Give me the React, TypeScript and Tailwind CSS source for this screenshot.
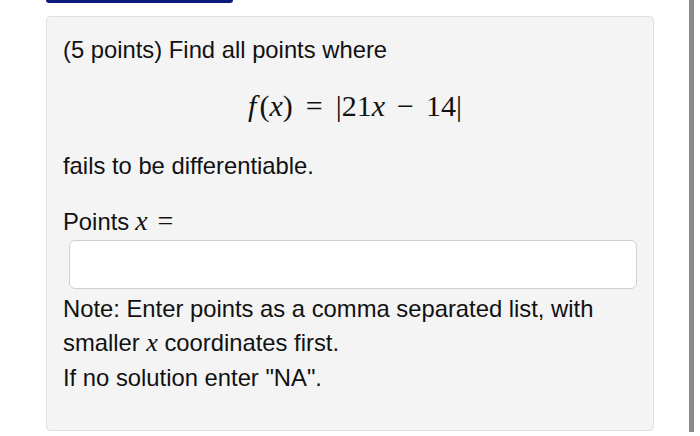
import React from "react";

const sans = { fontFamily: '"Liberation Sans", Arial, sans-serif' };
const serif = { fontFamily: '"Liberation Serif", "Times New Roman", serif' };

function MathX() {
  return <span className="italic" style={serif}>x</span>;
}

export default function App() {
  return (
    <div className="flex w-[700px] h-[436px] bg-white overflow-hidden" style={sans}>
      <div className="w-[689px] pl-[46px]">
        <div className="w-[187px] h-[3px] bg-[#0b1a7c] rounded-b-[4px]" />
        <div className="mt-[13px] w-[608px] h-[415px] bg-[#f4f4f4] border border-[#e0e0e0] rounded-[4px] pl-[16px] pr-[8px] pt-[16px] text-[23.8px] leading-[34.5px] text-[#111]">
          <p>(5 points) Find all points where</p>
          <div className="mt-[22px] h-[34px] flex justify-center items-center text-[30px] pl-[2px]" style={serif}>
            <span className="italic mr-[3px]">f</span>
            <span>(</span>
            <span className="italic">x</span>
            <span>)</span>
            <span className="mx-[13px]">=</span>
            <span>|21</span>
            <span className="italic">x</span>
            <span className="mx-[12px]">−</span>
            <span>14|</span>
          </div>
          <p className="mt-[25px]">fails to be differentiable.</p>
          <p className="mt-[22px] flex items-baseline">
            <span>Points</span>
            <span className="ml-[6px] text-[28px] leading-none"><MathX /></span>
            <span className="ml-[10px] text-[28px] leading-none" style={serif}>=</span>
          </p>
          <div className="ml-[6px] w-[568px] h-[49px] bg-white border border-[#cfcfcf] rounded-[6px]" />
          <p className="mt-[3px]">Note: Enter points as a comma separated list, with</p>
          <p>
            smaller <span className="text-[26px] leading-none"><MathX /></span> coordinates first.
          </p>
          <p>If no solution enter "NA".</p>
        </div>
      </div>
      <div className="w-[5px] h-[432px] bg-[#8a8a8a]" />
    </div>
  );
}
